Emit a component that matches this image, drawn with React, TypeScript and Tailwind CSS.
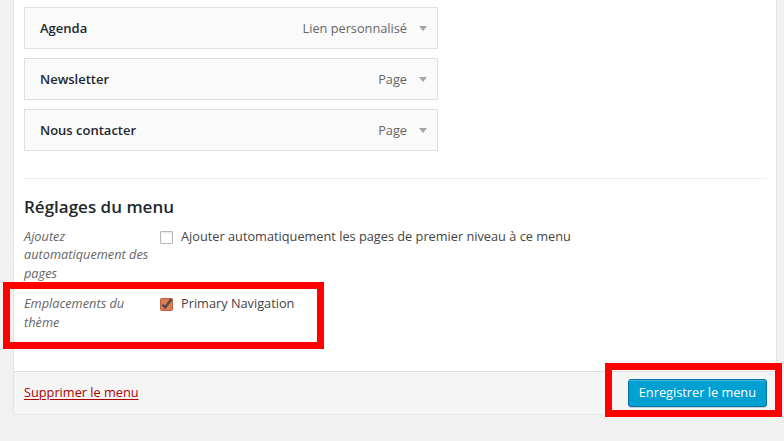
import React from 'react';

const menuItems = [
    { title: 'Agenda', type: 'Lien personnalisé' },
    { title: 'Newsletter', type: 'Page' },
    { title: 'Nous contacter', type: 'Page' },
];

const Arrow = () => (
    <svg width="8" height="6" viewBox="0 0 8 6" className="ml-[12px]">
        <path d="M0 0 L8 0 L4 5 Z" fill="#a0a5aa" />
    </svg>
);

const Checkbox = ({ checked }: { checked?: boolean }) =>
    checked ? (
        <svg width="13" height="14" viewBox="0 0 13 14" className="shrink-0">
            <rect x="0.5" y="1.5" width="12" height="12" rx="1" fill="#e07a52" stroke="#b8603c" />
            <path d="M2.5 7.5 L5.2 10.5 L11.5 2" fill="none" stroke="#4a4a4a" strokeWidth="2.2" />
        </svg>
    ) : (
        <span className="block w-[13px] h-[13px] shrink-0 border border-[#b4b9be] rounded-[1px] bg-white shadow-[inset_0_1px_2px_rgba(0,0,0,0.1)]" />
    );

export default function App() {
    return (
        <div className="relative w-[784px] h-[441px] overflow-hidden bg-[#f1f1f1] text-[12.75px] text-[#444]" style={{ fontFamily: '"Open Sans", "Liberation Sans", sans-serif' }}>
            <div className="ml-[13px] w-[764px] bg-white border-x border-[#e5e5e5] shadow-[0_1px_1px_rgba(0,0,0,0.04)]">
                <div className="pl-[10px] pr-[9px] pt-[7px]">
                    {/* Menu items */}
                    <div className="flex flex-col gap-[9px] w-[414px]">
                        {menuItems.map((item) => (
                            <div key={item.title} className="h-[42px] flex items-center justify-between bg-[#fafafa] border border-[#dfdfdf] pt-[2px] pl-[15px] pr-[10px]">
                                <span className="font-semibold text-[13px] text-[#23282d]">{item.title}</span>
                                <span className="flex items-center text-[#666]">
                                    {item.type}
                                    <Arrow />
                                </span>
                            </div>
                        ))}
                    </div>

                    <div className="mt-[27px] h-px bg-[#eeeeee]" />

                    {/* Menu settings */}
                    <h3 className="mt-[16px] text-[17px] leading-[24px] font-semibold text-[#23282d]">Réglages du menu</h3>
                    <div className="mt-[8px] flex flex-col gap-[12px] leading-[18.4px] pb-[40px]">
                        <div className="flex">
                            <div className="w-[136px] italic text-[#666] whitespace-nowrap">
                                Ajoutez<br />automatiquement des<br />pages
                            </div>
                            <label className="flex items-start gap-[8px] text-[#444]">
                                <span className="mt-[4px]"><Checkbox /></span>
                                Ajouter automatiquement les pages de premier niveau à ce menu
                            </label>
                        </div>
                        <div className="flex">
                            <div className="w-[136px] italic text-[#666] whitespace-nowrap">
                                Emplacements du<br />thème
                            </div>
                            <label className="flex items-start gap-[8px] text-[#444]">
                                <span className="mt-[3px]"><Checkbox checked /></span>
                                Primary Navigation
                            </label>
                        </div>
                    </div>
                </div>

                {/* Footer */}
                <div className="h-[43px] flex items-center justify-between bg-[#f5f5f5] border-t border-[#dddddd] pl-[10px] pr-[9px]">
                    <a href="#" className="text-[#a00] underline underline-offset-[2px]">Supprimer le menu</a>
                    <button className="h-[28px] px-[10px] rounded-[3px] bg-[#00a0d2] border border-[#0073aa] text-white text-[12.75px] shadow-[inset_0_1px_0_rgba(120,200,230,0.5),0_1px_0_rgba(0,0,0,0.15)]">
                        Enregistrer le menu
                    </button>
                </div>
            </div>

            {/* Highlight annotations */}
            <div className="absolute left-[3px] top-[282px] w-[321px] h-[67px] border-[7px] border-[#ff0000]" />
            <div className="absolute left-[605px] top-[363px] w-[177px] h-[54px] border-[7px] border-[#ff0000]" />
        </div>
    );
}
